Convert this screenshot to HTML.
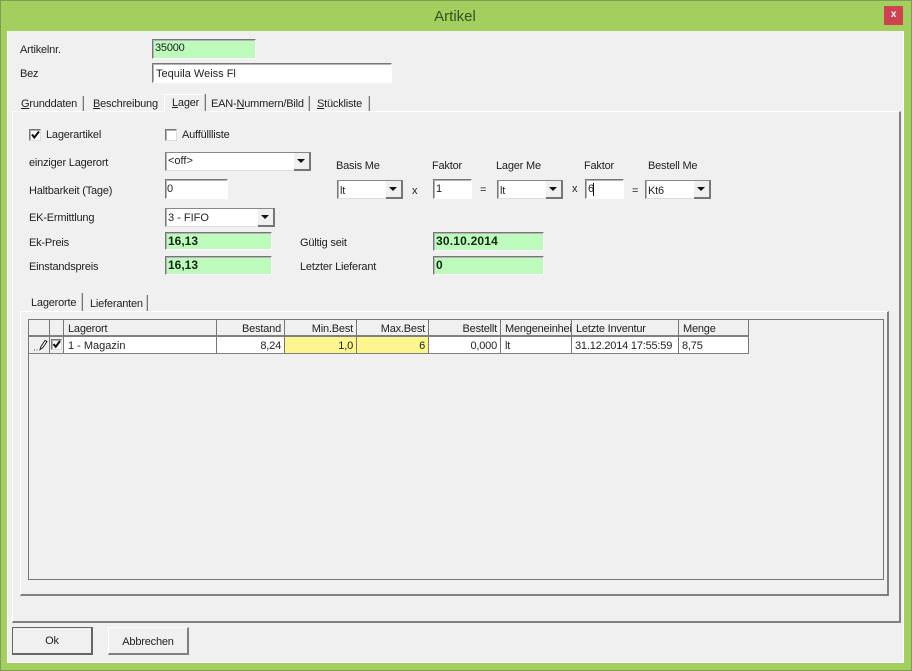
<!DOCTYPE html>
<html><head><meta charset="utf-8"><style>
html,body{margin:0;padding:0;width:912px;height:671px;overflow:hidden;background:#a2cf5d}
body{font:11px/14px "Liberation Sans",sans-serif;letter-spacing:-.2px;color:#222;position:relative}
div{position:absolute;white-space:nowrap;box-sizing:border-box}
.t{height:14px;margin-top:1px}
.i{border-top:1px solid #777;border-left:1px solid #777;border-right:1px solid #fff;border-bottom:1px solid #fff;box-shadow:inset 1px 1px #b4b4b4;background:#fff;padding:2px 0 0 2px;line-height:15px;overflow:hidden}
.g{background:#bdfbbd;font-weight:bold;font-size:12px;letter-spacing:0;color:#142814;padding-left:2px;padding-top:0}
.c{border-top:1px solid #888;border-left:1px solid #777;border-right:1px solid #ddd;border-bottom:1px solid #ddd;box-shadow:inset 1px 0 #b4b4b4;background:#fff;padding:3px 0 0 2px;line-height:14px}
.b{right:-1px;top:-1px;bottom:-1px;width:17px;background:#f0f0f0;border-right:2px solid #777;border-bottom:2px solid #777;border-top:1px solid #888}
.b:after{content:"";position:absolute;left:3px;top:6px;border-left:4px solid transparent;border-right:4px solid transparent;border-top:4px solid #111}
.s{width:2px;background:#777;border-left:1px solid #ccc}
.h,.r{top:320px;height:17px;border-right:1px solid #777;border-bottom:2px solid #808080;padding:2px 3px 0;background:#f0f0f0;overflow:hidden;line-height:15px}
.r{top:337px;height:17px;background:#fff;border-bottom:1px solid #808080;padding:2px 3px 0 2px}
.R{text-align:right}
.y{background:#fdf58e}
.k{width:12px;height:12px;background:#fff;border-top:1px solid #777;border-left:1px solid #777;border-right:1px solid #ddd;border-bottom:1px solid #ddd;box-shadow:inset 1px 1px #b4b4b4}
</style></head><body>
<div style="left:0;top:0;width:912px;height:671px;border:1px solid #7f9f58"></div>
<div style="left:-1px;width:912px;top:8px;height:18px;text-align:center;font-size:15px;letter-spacing:0;line-height:18px;color:#38521f">Artikel</div>
<div style="left:884px;top:6px;width:19px;height:19px;background:#ce4150;color:#fff;font:bold 10px/18px 'Liberation Sans',sans-serif;text-align:center">x</div>
<div style="left:7px;top:31px;width:897px;height:632px;background:#f0f0f0;border-left:1px solid #fff;border-right:1px solid #fff;border-bottom:1px solid #fff"></div>

<div class="t" style="left:20px;top:42px">Artikelnr.</div>
<div class="i" style="left:152px;top:39px;width:104px;height:20px;background:#bdfbbd;line-height:14px;padding-top:1px">35000</div>
<div class="t" style="left:20px;top:66px">Bez</div>
<div class="i" style="left:152px;top:63px;width:240px;height:20px;padding:3px 0 0 3px;letter-spacing:0">Tequila Weiss Fl</div>

<!-- main tab pane -->
<div style="left:12px;top:111px;width:889px;height:512px;border-top:1px solid #fff;border-left:1px solid #fff;border-right:2px solid #808080;border-bottom:2px solid #808080"></div>
<div class="t" style="left:21px;top:96px"><u>G</u>runddaten</div>
<div class="s" style="left:82px;top:96px;height:15px"></div>
<div class="t" style="left:93px;top:96px"><u>B</u>eschreibung</div>
<div style="left:164px;top:94px;width:42px;height:18px;background:#f0f0f0;border-top:1px solid #fff;border-left:1px solid #fff"></div>
<div class="t" style="left:172px;top:95px"><u>L</u>ager</div>
<div class="s" style="left:204px;top:94px;height:17px"></div>
<div class="t" style="left:211px;top:96px">EAN-<u>N</u>ummern/Bild</div>
<div class="s" style="left:308px;top:96px;height:15px"></div>
<div class="t" style="left:317px;top:96px"><u>S</u>tückliste</div>
<div class="s" style="left:368px;top:96px;height:15px"></div>

<div class="k" style="left:29px;top:129px"><svg width="10" height="10" style="display:block"><path d="M2 4.5L4.3 7.5L9 1.5" fill="none" stroke="#111" stroke-width="2"/></svg></div>
<div class="t" style="left:46px;top:127px">Lagerartikel</div>
<div class="k" style="left:165px;top:129px"></div>
<div class="t" style="left:182px;top:127px">Auffüllliste</div>

<div class="t" style="left:29px;top:155px">einziger Lagerort</div>
<div class="c" style="left:165px;top:152px;width:146px;height:19px;padding-top:1px;letter-spacing:0">&lt;off&gt;<div class="b"></div></div>
<div class="t" style="left:29px;top:183px">Haltbarkeit (Tage)</div>
<div class="i" style="left:165px;top:179px;width:63px;height:20px;padding-left:1px">0</div>

<div class="t" style="left:336px;top:158px">Basis Me</div>
<div class="t" style="left:432px;top:158px">Faktor</div>
<div class="t" style="left:496px;top:158px">Lager Me</div>
<div class="t" style="left:584px;top:158px">Faktor</div>
<div class="t" style="left:648px;top:158px">Bestell Me</div>
<div class="c" style="left:337px;top:180px;width:66px;height:19px">lt<div class="b"></div></div>
<div class="t" style="left:412px;top:183px">x</div>
<div class="i" style="left:433px;top:179px;width:39px;height:20px">1</div>
<div class="t" style="left:480px;top:182px">=</div>
<div class="c" style="left:497px;top:180px;width:66px;height:19px">lt<div class="b"></div></div>
<div class="t" style="left:572px;top:181px">x</div>
<div class="i" style="left:585px;top:179px;width:39px;height:20px">6</div>
<div style="left:593px;top:183px;width:1px;height:13px;background:#111"></div>
<div class="t" style="left:632px;top:183px">=</div>
<div class="c" style="left:645px;top:180px;width:66px;height:19px">Kt6<div class="b"></div></div>

<div class="t" style="left:29px;top:210px">EK-Ermittlung</div>
<div class="c" style="left:165px;top:208px;width:110px;height:19px;padding-top:2px;letter-spacing:0">3 - FIFO<div class="b"></div></div>
<div class="t" style="left:29px;top:235px">Ek-Preis</div>
<div class="i g" style="left:165px;top:232px;width:107px;height:18px;padding-top:1px">16,13</div>
<div class="t" style="left:29px;top:259px">Einstandspreis</div>
<div class="i g" style="left:165px;top:256px;width:107px;height:19px;padding-top:1px">16,13</div>
<div class="t" style="left:300px;top:235px">Gültig seit</div>
<div class="i g" style="left:433px;top:232px;width:111px;height:19px;padding-top:1px;letter-spacing:.2px">30.10.2014</div>
<div class="t" style="left:300px;top:259px">Letzter Lieferant</div>
<div class="i g" style="left:433px;top:256px;width:111px;height:19px;padding-top:1px">0</div>

<!-- inner tab pane -->
<div style="left:20px;top:311px;width:869px;height:285px;border-top:1px solid #fff;border-left:1px solid #fff;border-right:2px solid #808080;border-bottom:2px solid #808080"></div>
<div class="t" style="left:31px;top:295px">Lagerorte</div>
<div class="s" style="left:81px;top:293px;height:18px"></div>
<div class="t" style="left:90px;top:296px">Lieferanten</div>
<div class="s" style="left:146px;top:295px;height:16px"></div>

<!-- grid -->
<div style="left:28px;top:319px;width:856px;height:261px;border:1px solid #777;background:#f0f0f0"></div>
<div class="h" style="left:29px;width:21px"></div>
<div class="h" style="left:50px;width:14px"></div>
<div class="h" style="left:64px;width:153px;padding-left:4px">Lagerort</div>
<div class="h R" style="left:217px;width:68px">Bestand</div>
<div class="h R" style="left:285px;width:72px">Min.Best</div>
<div class="h R" style="left:357px;width:72px">Max.Best</div>
<div class="h R" style="left:429px;width:72px">Bestellt</div>
<div class="h" style="left:501px;width:71px;padding-left:4px">Mengeneinheit</div>
<div class="h" style="left:572px;width:107px;padding-left:4px">Letzte Inventur</div>
<div class="h" style="left:679px;width:70px;padding-left:4px">Menge</div>

<div class="r" style="left:29px;width:21px;background:#f0f0f0;padding:1px 0 0 5px"><svg width="14" height="13" style="display:block"><path d="M0 12h1M2.5 12h1" stroke="#444" stroke-width="1"/><path d="M6 11.5L7 8.5L11 2.5L13 3.5L9 9.5Z" fill="#fff" stroke="#222" stroke-width="1"/></svg></div>
<div class="r" style="left:50px;width:14px;background:#f0f0f0;padding:0"><div class="k" style="left:1px;top:2px;width:11px;height:11px"><svg width="9" height="9" style="display:block"><path d="M1.5 4L3.7 6.8L8 1" fill="none" stroke="#111" stroke-width="2"/></svg></div></div>
<div class="r" style="left:64px;width:153px;padding-left:4px;letter-spacing:0">1 - Magazin</div>
<div class="r R" style="left:217px;width:68px">8,24</div>
<div class="r R y" style="left:285px;width:72px">1,0</div>
<div class="r R y" style="left:357px;width:72px">6</div>
<div class="r R" style="left:429px;width:72px">0,000</div>
<div class="r" style="left:501px;width:71px;padding-left:4px">lt</div>
<div class="r" style="left:572px;width:107px;padding-left:3px">31.12.2014 17:55:59</div>
<div class="r" style="left:679px;width:70px;padding-left:3px">8,75</div>

<!-- buttons -->
<div style="left:12px;top:627px;width:81px;height:28px;border:1px solid #666;border-right:2px solid #666;border-bottom:2px solid #666;text-align:center;line-height:27px;background:#f0f0f0">Ok</div>
<div style="left:108px;top:627px;width:81px;height:28px;border-top:1px solid #fff;border-left:1px solid #fff;border-right:2px solid #808080;border-bottom:2px solid #808080;text-align:center;line-height:28px;background:#f0f0f0">Abbrechen</div>
</body></html>
